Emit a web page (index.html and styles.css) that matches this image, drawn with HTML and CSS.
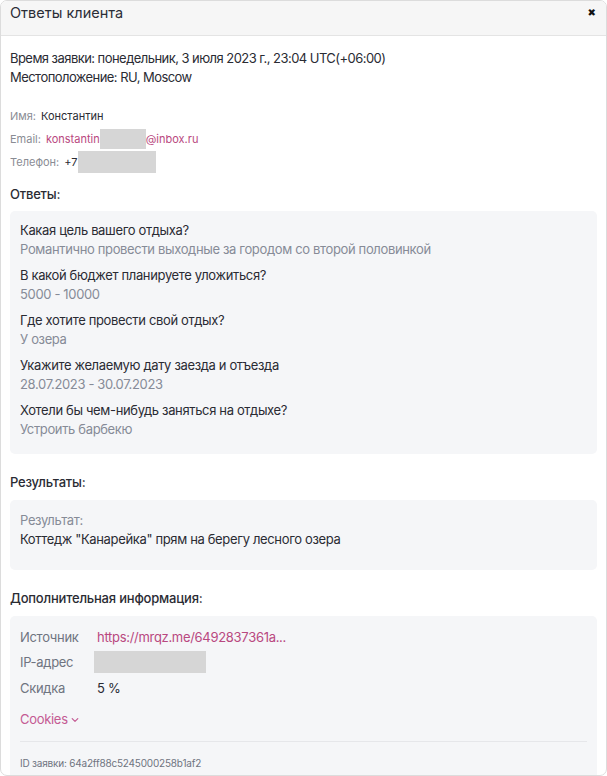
FILE: index.html
```html
<!DOCTYPE html>
<html lang="ru">
<head>
<meta charset="utf-8">
<link rel="stylesheet" href="styles.css">
</head>
<body>
<div class="modal">
  <div class="modal-header">
    <div class="modal-title">Ответы клиента</div>
    <div class="close">&#x2716;</div>
  </div>
  <div class="modal-body">
    <div class="meta">
      <div>Время заявки: понедельник, 3 июля 2023 г., 23:04 UTC(+06:00)</div>
      <div>Местоположение: RU, Moscow</div>
    </div>
    <div class="contacts">
      <div class="contact"><span class="c-label">Имя:</span><span class="c-value">Константин</span></div>
      <div class="contact"><span class="c-label">Email:</span><span class="c-value link">konstantin<span class="redact r-email"></span>@inbox.ru</span></div>
      <div class="contact"><span class="c-label">Телефон:</span><span class="c-value">+7<span class="redact r-phone"></span></span></div>
    </div>

    <div class="section-title first">Ответы:</div>
    <div class="panel answers">
      <div class="qa"><div class="q">Какая цель вашего отдыха?</div><div class="a">Романтично провести выходные за городом со второй половинкой</div></div>
      <div class="qa"><div class="q">В какой бюджет планируете уложиться?</div><div class="a">5000 - 10000</div></div>
      <div class="qa"><div class="q">Где хотите провести свой отдых?</div><div class="a">У озера</div></div>
      <div class="qa"><div class="q">Укажите желаемую дату заезда и отъезда</div><div class="a">28.07.2023 - 30.07.2023</div></div>
      <div class="qa"><div class="q">Хотели бы чем-нибудь заняться на отдыхе?</div><div class="a">Устроить барбекю</div></div>
    </div>

    <div class="section-title">Результаты:</div>
    <div class="panel results">
      <div class="a">Результат:</div>
      <div class="q">Коттедж "Канарейка" прям на берегу лесного озера</div>
    </div>

    <div class="section-title">Дополнительная информация:</div>
    <div class="panel extra">
      <div class="row"><span class="r-label">Источник</span><span class="r-value link">https://mrqz.me/6492837361a...</span></div>
      <div class="row"><span class="r-label">IP-адрес</span><span class="redact r-ip"></span></div>
      <div class="row"><span class="r-label">Скидка</span><span class="r-value">5 %</span></div>
      <div class="cookies">Cookies <svg class="chev" width="8" height="6" viewBox="0 0 8 6"><path d="M1.2 1.6 L4 4.4 L6.8 1.6" fill="none" stroke="currentColor" stroke-width="1.2" stroke-linecap="round" stroke-linejoin="round"/></svg></div>
      <div class="divider"></div>
      <div class="req-id">ID заявки: 64a2ff88c5245000258b1af2</div>
    </div>
  </div>
</div>
</body>
</html>
```

FILE: styles.css
```css
* { box-sizing: border-box; }
html, body { margin: 0; padding: 0; background: #ffffff; }
body {
  font-family: Inter, "Noto Sans", sans-serif;
  color: #2a2b33;
  width: 607px;
  height: 776px;
  overflow: hidden;
}
.modal {
  width: 607px;
  height: 776px;
  border: 1px solid #dcdcdc;
  border-radius: 7px;
  overflow: hidden;
  background: #fff;
}
.modal-header {
  height: 35px;
  background: #f6f6f6;
  border-bottom: 1px solid #e4e4e4;
  display: flex;
  justify-content: space-between;
  align-items: flex-start;
  padding: 2px 10px 0 9px;
}
.modal-title {
  font-size: 14.5px;
  line-height: 20px;
  color: #2b2d36;
  letter-spacing: 0;
}
.close {
  font-size: 10px;
  line-height: 20px;
  color: #111;
  font-family: "DejaVu Sans", sans-serif;
  font-weight: bold;
}
.modal-body { padding: 13px 9px 0 9px; }
.meta {
  font-size: 13px;
  line-height: 19px;
  letter-spacing: -0.55px;
}
.contacts { margin-top: 17px; }
.contact {
  display: flex;
  align-items: center;
  height: 23px;
  font-size: 11px;
}
.c-label { color: #8a8c94; margin-right: 5px; }
.c-value { color: #2a2b33; display: inline-flex; align-items: center; }
.link { color: #b94880; }
.redact { display: inline-block; background: #d6d6d6; }
.r-email { width: 46px; height: 20px; }
.r-phone { width: 78px; height: 22px; }
.r-ip { width: 112px; height: 22px; }
.section-title {
  font-size: 13px;
  font-weight: 500;
  line-height: 19px;
  margin-top: 8px;
  letter-spacing: -0.2px;
}
.section-title.first { margin-top: 12px; }
.panel {
  background: #f5f6f8;
  border-radius: 5px;
  margin-top: 8px;
  padding: 10px 10px;
}
.answers { padding-bottom: 15px; margin-bottom: 19px; margin-top: 7px; }
.qa + .qa { margin-top: 7px; }
.q, .a {
  font-size: 13px;
  line-height: 19px;
  letter-spacing: -0.35px;
}
.q { color: #2a2b33; }
.a { color: #868b97; }
.results { padding-top: 11px; padding-bottom: 21px; margin-bottom: 19px; }
.extra { padding-top: 8px; height: 200px; }
.row {
  display: flex;
  align-items: center;
  height: 25.5px;
  font-size: 13px;
  letter-spacing: -0.3px;
}
.r-label { color: #6f7480; width: 77px; }
.row .redact { margin-left: -3px; }
.r-value { color: #2a2b33; }
.row .link { color: #b94880; }
.cookies {
  margin-top: 8px;
  color: #c45a93;
  font-size: 13px;
  line-height: 20px;
  display: flex;
  align-items: center;
  gap: 3px;
  letter-spacing: -0.3px;
}
.chev { margin-top: 2px; }
.divider {
  height: 1px;
  background: #e6e7ea;
  margin-top: 12px;
}
.req-id {
  margin-top: 15px;
  font-size: 10px;
  color: #6f7480;
  letter-spacing: -0.2px;
}
```
